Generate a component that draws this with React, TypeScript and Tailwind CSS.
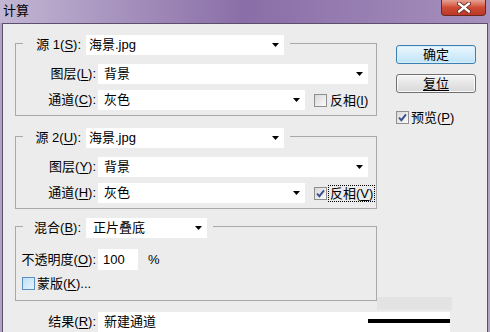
import type { ReactNode } from 'react';

const FONT = "font-['Liberation_Sans','Noto_Sans_CJK_SC',sans-serif]";

// 下拉箭头
function Arrow() {
  return (
    <svg width="7" height="4" viewBox="0 0 7 4">
      <path d="M0 0h7L3.5 4z" fill="#000" />
    </svg>
  );
}

// 带下划线的助记字母
function U({ c }: { c: string }) {
  return <span className="underline underline-offset-[2px]">{c}</span>;
}

function Select({ className, text, children }: { className: string; text: string; children?: ReactNode }) {
  return (
    <div className={`relative h-[20px] bg-white flex items-center justify-between pr-[5px] ${className}`}>
      <span className="leading-[20px] whitespace-nowrap">{text}</span>
      <Arrow />
      {children}
    </div>
  );
}

function Check({ checked, tint }: { checked?: boolean; tint?: boolean }) {
  return (
    <span
      className={`w-[13px] h-[13px] shrink-0 border flex items-center justify-center ${
        tint
          ? 'border-[#5a8fc0] bg-linear-to-br from-[#bfe0f5] to-[#e6f3fb]'
          : 'border-[#8e8f8f] bg-linear-to-br from-[#d8d8d8] to-[#fbfbfb]'
      }`}
    >
      {checked && (
        <svg width="9" height="9" viewBox="0 0 9 9">
          <path d="M1 4.6L3.4 7.2L8 1.4" stroke="#3a4d8c" strokeWidth="1.9" fill="none" />
        </svg>
      )}
    </span>
  );
}

// 源 1 / 源 2 分组
function SourceGroup({ n, src, layer, ch, inv, focus }: { n: string; src: string; layer: string; ch: string; inv: string; focus?: boolean }) {
  return (
    <div className="border border-[#a9a9a9] pb-[5px]">
      <div className="-mt-[9px] ml-[7px] w-[267px] flex items-center bg-[#ececec]">
        <div className="w-[63px] pr-[5px] text-right whitespace-nowrap">
          源 {n}(<U c={src} />):
        </div>
        <Select className="w-[198px] pl-[3px]" text="海景.jpg" />
      </div>
      <div className="mt-[9px] flex items-center">
        <div className="w-[82px] pr-[2px] text-right whitespace-nowrap">
          图层(<U c={layer} />):
        </div>
        <Select className="w-[270px] pl-[6px]" text="背景" />
      </div>
      <div className="mt-[6px] flex items-center">
        <div className="w-[82px] pr-[2px] text-right whitespace-nowrap">
          通道(<U c={ch} />):
        </div>
        <Select className="w-[207px] pl-[6px]" text="灰色" />
        <div className="ml-[9px] flex items-center">
          <Check checked={focus} />
          <span className={`ml-[2px] px-[1px] leading-[15px] whitespace-nowrap ${focus ? 'outline-1 outline-dotted outline-black' : ''}`}>
            反相(<U c={inv} />)
          </span>
        </div>
      </div>
    </div>
  );
}

export default function App() {
  return (
    <div className={`w-[490px] h-[332px] overflow-hidden flex flex-col bg-[#b2a3c5] text-[13px] text-black ${FONT}`}>
      {/* 标题栏 */}
      <div className="h-[23px] shrink-0 flex items-start justify-between bg-linear-to-r from-[#c3b6d3] via-[#8a6ea7] to-[#a690bd]">
        <span className="pl-[3px] pt-[3px] leading-[15px] text-[13px]">计算</span>
        <div className="mr-[4px] w-[45px] h-[16px] rounded-b-[4px] border border-t-0 border-[#6e2620] bg-linear-to-b from-[#e6a193] via-[#cf4a35] to-[#b93a27] flex items-center justify-center">
          <svg width="14" height="11" viewBox="0 0 14 11">
            <path d="M2 1.5L12 9.5M12 1.5L2 9.5" stroke="#5a1f1a" strokeWidth="4" strokeLinecap="round" />
            <path d="M2 1.5L12 9.5M12 1.5L2 9.5" stroke="#fff" strokeWidth="2.4" strokeLinecap="round" />
          </svg>
        </div>
      </div>

      {/* 对话框主体 */}
      <div className="flex-1 ml-[2px] mr-[2px] bg-[#ececec] border-l border-t border-r border-[#5c4f6e] flex flex-col relative">
        <div className="flex items-start">
          {/* 左侧分组 */}
          <div className="w-[374px] pl-[12px] pt-[19px] shrink-0">
            <SourceGroup n="1" src="S" layer="L" ch="C" inv="I" />
            <div className="mt-[20px]">
              <SourceGroup n="2" src="U" layer="Y" ch="H" inv="V" focus />
            </div>

            {/* 混合 */}
            <div className="mt-[17px] border border-[#a9a9a9] pb-[9px]">
              <div className="-mt-[9px] ml-[7px] w-[190px] flex items-center bg-[#ececec]">
                <div className="w-[63px] pr-[5px] text-right whitespace-nowrap">
                  混合(<U c="B" />):
                </div>
                <Select className="w-[121px] pl-[7px]" text="正片叠底" />
              </div>
              <div className="mt-[11px] flex items-center">
                <div className="w-[82px] pr-[2px] text-right whitespace-nowrap">
                  不透明度(<U c="O" />):
                </div>
                <div className="w-[40px] h-[21px] bg-white pl-[5px] leading-[21px]">100</div>
                <span className="ml-[10px]">%</span>
              </div>
              <div className="mt-[6px] pl-[6px] flex items-center">
                <Check tint />
                <span className="ml-[2px] leading-[15px] whitespace-nowrap">
                  蒙版(<U c="K" />)...
                </span>
              </div>
            </div>
          </div>

          {/* 右侧按钮 */}
          <div className="ml-[19px] pt-[21px] w-[80px] flex flex-col">
            <button className="h-[19px] w-[80px] rounded-[3px] border border-[#3c7fb1] bg-linear-to-b from-[#ecf7fd] to-[#bfe4f8] shadow-[inset_0_0_0_1px_#d5eefb] leading-[17px]">
              确定
            </button>
            <button className="mt-[10px] h-[19px] w-[80px] rounded-[3px] border border-[#707070] bg-linear-to-b from-[#f4f4f4] to-[#d8d8d8] shadow-[inset_0_0_0_1px_#fbfbfb] leading-[17px]">
              <span className="underline underline-offset-[2px]">复位</span>
            </button>
            <div className="mt-[17px] flex items-center">
              <Check checked />
              <span className="ml-[2px] leading-[15px] whitespace-nowrap">
                预览(<U c="P" />)
              </span>
            </div>
          </div>
        </div>

        {/* 结果 */}
        <div className="mt-[11px] flex items-center">
          <div className="w-[95px] pr-[2px] text-right whitespace-nowrap">
            结果(<U c="R" />):
          </div>
          <div className="relative w-[352px] h-[20px] bg-white pl-[6px] leading-[20px]">
            新建通道
            <div className="absolute left-[270px] top-[7px] w-[82px] h-[4px] bg-black" />
          </div>
        </div>
        <div className="absolute left-[374px] top-[273px] w-[75px] h-[13px] bg-[#e3e3e3]" />
      </div>
    </div>
  );
}
